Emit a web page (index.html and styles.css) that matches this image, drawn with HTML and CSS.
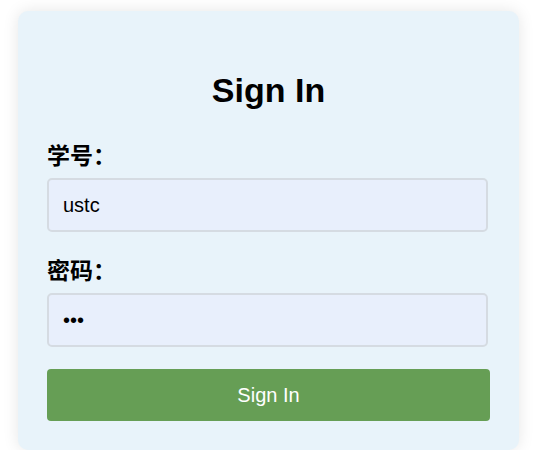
FILE: index.html
```html
<!DOCTYPE html>
<html lang="zh-CN">
<head>
<meta charset="utf-8">
<title>Sign In</title>
<link rel="stylesheet" href="styles.css">
</head>
<body>
<form class="card">
  <h1 class="title">Sign In</h1>
  <label class="label" for="sid">学号：</label>
  <input class="field" id="sid" type="text" value="ustc">
  <label class="label label-second" for="pwd">密码：</label>
  <input class="field" id="pwd" type="password" value="abc">
  <button class="btn" type="button">Sign In</button>
</form>
</body>
</html>
```
FILE: styles.css
```css
html, body {
  margin: 0;
  background: #ffffff;
}
body {
  padding: 11px 0 0 18px;
  font-family: "Liberation Sans", Arial, "Noto Sans CJK SC", sans-serif;
}
.card {
  box-sizing: border-box;
  width: 501px;
  height: 439px;
  padding: 59px 29px 29px 29px;
  background: #e8f3fa;
  border-radius: 10px;
  box-shadow: 0 0 16px rgba(0, 0, 0, 0.1);
  display: flex;
  flex-direction: column;
  align-items: flex-start;
}
.title {
  align-self: stretch;
  margin: 0;
  font-size: 34px;
  line-height: 40px;
  font-weight: bold;
  text-align: center;
  color: #000;
}
.label {
  display: block;
  margin-top: 34px;
  font-size: 23px;
  line-height: 24px;
  font-weight: bold;
  color: #000;
}
.label-second {
  margin-top: 27px;
}
.field {
  box-sizing: border-box;
  width: 441px;
  height: 54px;
  margin-top: 10px;
  padding: 0 14px;
  font-family: "Liberation Sans", Arial, sans-serif;
  font-size: 20px;
  color: #000;
  background: #e8effc;
  border: 2px solid #d5dbe2;
  border-radius: 5px;
  outline: none;
}
.btn {
  box-sizing: border-box;
  width: 443px;
  height: 52px;
  margin-top: 22px;
  font-family: "Liberation Sans", Arial, sans-serif;
  font-size: 20px;
  color: #ffffff;
  background: #669e55;
  border: none;
  border-radius: 4px;
}
```
